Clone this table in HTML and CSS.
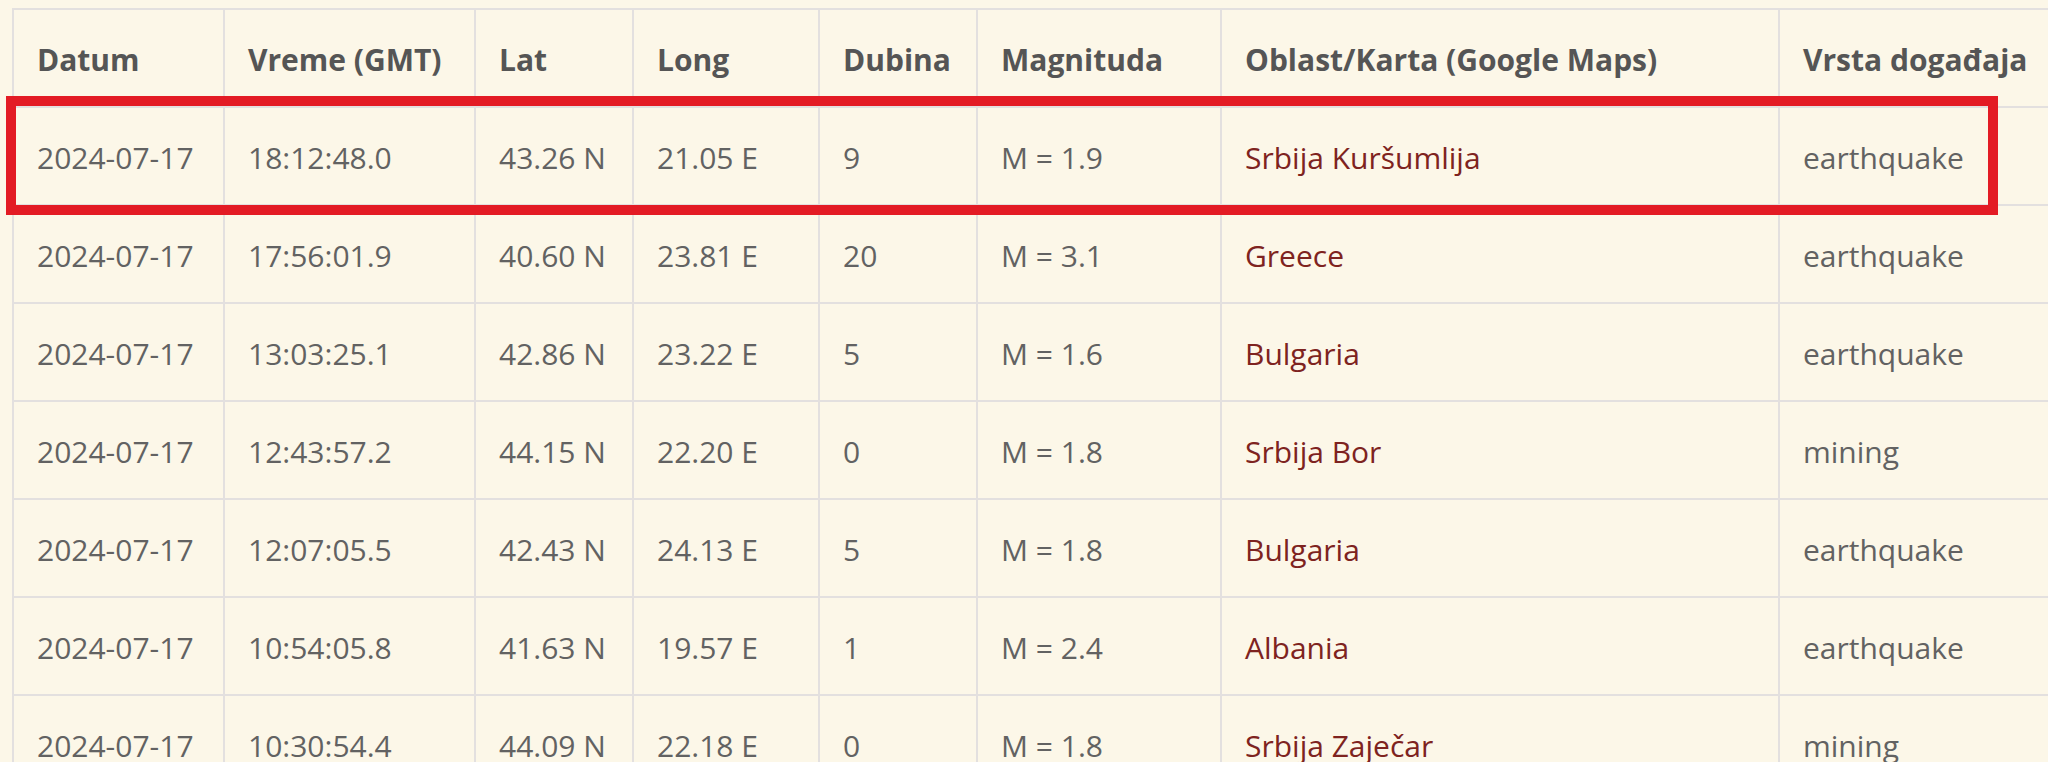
FILE: index.html
```html
<!DOCTYPE html>
<html lang="sr">
<head>
<meta charset="utf-8">
<title>Zemljotresi</title>
<link rel="stylesheet" href="styles.css">
</head>
<body>
<div class="wrap">
  <table class="quakes">
    <colgroup>
      <col class="c-date"><col class="c-time"><col class="c-lat"><col class="c-long"><col class="c-depth"><col class="c-mag"><col class="c-area"><col class="c-type">
    </colgroup>
    <thead>
      <tr><th>Datum</th><th>Vreme (GMT)</th><th>Lat</th><th>Long</th><th>Dubina</th><th>Magnituda</th><th>Oblast/Karta (Google Maps)</th><th>Vrsta događaja</th></tr>
    </thead>
    <tbody>
      <tr><td>2024-07-17</td><td>18:12:48.0</td><td>43.26 N</td><td>21.05 E</td><td>9</td><td>M = 1.9</td><td><a href="#">Srbija Kuršumlija</a></td><td>earthquake</td></tr>
      <tr><td>2024-07-17</td><td>17:56:01.9</td><td>40.60 N</td><td>23.81 E</td><td>20</td><td>M = 3.1</td><td><a href="#">Greece</a></td><td>earthquake</td></tr>
      <tr><td>2024-07-17</td><td>13:03:25.1</td><td>42.86 N</td><td>23.22 E</td><td>5</td><td>M = 1.6</td><td><a href="#">Bulgaria</a></td><td>earthquake</td></tr>
      <tr><td>2024-07-17</td><td>12:43:57.2</td><td>44.15 N</td><td>22.20 E</td><td>0</td><td>M = 1.8</td><td><a href="#">Srbija Bor</a></td><td>mining</td></tr>
      <tr><td>2024-07-17</td><td>12:07:05.5</td><td>42.43 N</td><td>24.13 E</td><td>5</td><td>M = 1.8</td><td><a href="#">Bulgaria</a></td><td>earthquake</td></tr>
      <tr><td>2024-07-17</td><td>10:54:05.8</td><td>41.63 N</td><td>19.57 E</td><td>1</td><td>M = 2.4</td><td><a href="#">Albania</a></td><td>earthquake</td></tr>
      <tr><td>2024-07-17</td><td>10:30:54.4</td><td>44.09 N</td><td>22.18 E</td><td>0</td><td>M = 1.8</td><td><a href="#">Srbija Zaječar</a></td><td>mining</td></tr>
    </tbody>
  </table>
  <div class="highlight"></div>
</div>
</body>
</html>
```

FILE: styles.css
```css
html, body {
  margin: 0;
  padding: 0;
  background: #fcf7e8;
  overflow: hidden;
}

.wrap {
  position: relative;
  padding: 8px 0 0 12px;
  width: 2100px;
}

.quakes {
  border-collapse: collapse;
  table-layout: fixed;
  width: 2047px;
  font-family: "Open Sans", "Noto Sans", sans-serif;
  font-size: 30px;
  color: #626262;
  background: #fcf7e8;
}

.c-date { width: 211px; }
.c-time { width: 251px; }
.c-lat { width: 158px; }
.c-long { width: 186px; }
.c-depth { width: 158px; }
.c-mag { width: 244px; }
.c-area { width: 558px; }
.c-type { width: 281px; }

.quakes th,
.quakes td {
  border: 2px solid #e3e0df;
  padding: 27px 23px 24px;
  line-height: 45px;
  text-align: left;
  white-space: nowrap;
  overflow: hidden;
}

.quakes th {
  font-weight: 700;
  font-size: 30px;
  color: #555555;
}

.quakes a {
  color: #7e2320;
  text-decoration: none;
}

.highlight {
  position: absolute;
  left: 6px;
  top: 96px;
  width: 1972px;
  height: 99px;
  border: 10px solid #e31b24;
  pointer-events: none;
}
```
